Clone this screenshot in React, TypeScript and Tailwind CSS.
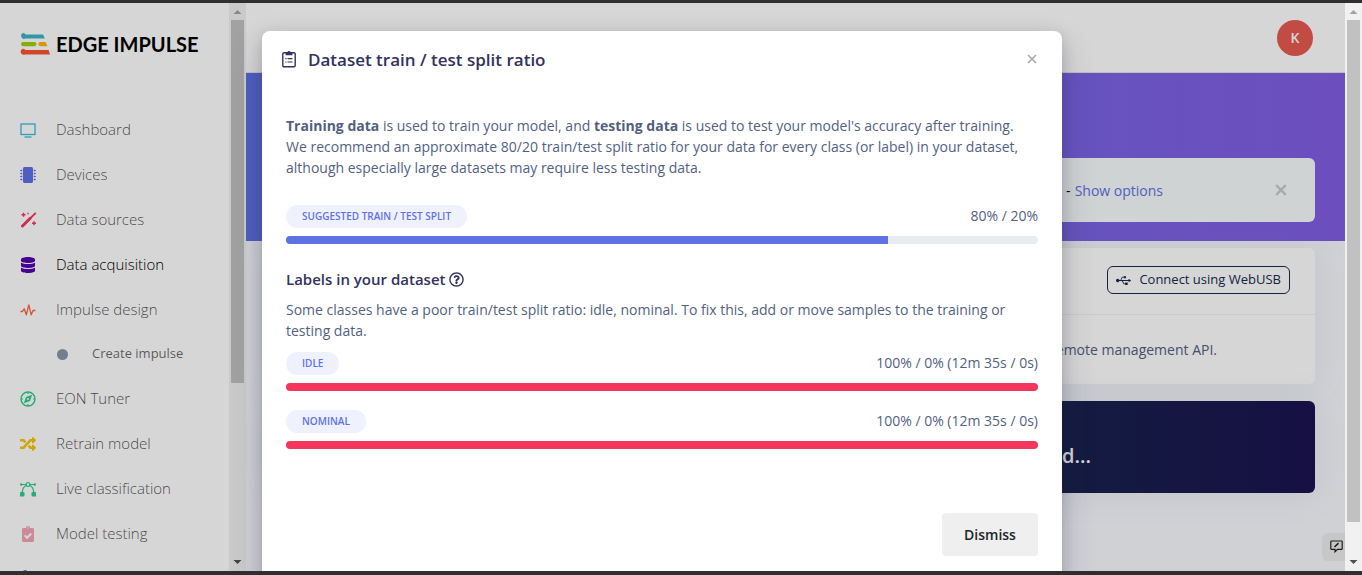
import type { ReactNode } from 'react'
import clsx from 'clsx'
import {
  FaClipboardCheck,
  FaCodeBranch,
  FaDatabase,
  FaMicrochip,
  FaRandom,
  FaRegQuestionCircle,
  FaUsb,
} from 'react-icons/fa'

function LogoMark() {
  return (
    <svg width="30" height="22" viewBox="0 0 30 22">
      <path d="M3 0a3 3 0 0 1 2.6 1.4H23l1.8 4.2H5.4A3 3 0 1 1 3 0z" fill="#3ab4c6" />
      <rect x="1" y="9" width="15.500" height="4.200" rx="2.100" fill="#a1d00a" />
      <path d="M20.400 9h5.200l1.800 4.200h-7a2.100 2.100 0 0 1 0-4.200z" fill="#ffb50a" />
      <path d="M3 15.800a3 3 0 0 1 2.400 1.200H28.600l1.400 4.400H5A3 3 0 1 1 3 15.800z" fill="#fb5430" />
    </svg>
  )
}

function TvIcon() {
  return (
    <svg width="16" height="16" viewBox="0 0 16 16" fill="none" stroke="currentColor">
      <rect x="1" y="2" width="14" height="10.500" strokeWidth="1.300" />
      <path d="M4.500 15h7" strokeWidth="1.300" />
    </svg>
  )
}

function WandIcon() {
  return (
    <svg width="17" height="16" viewBox="0 0 17 16" fill="none" stroke="currentColor">
      <path d="M2.500 14 10 6.500" strokeWidth="3" strokeLinecap="round" />
      <path d="M9 7.500 15.800 0.800" strokeWidth="1.800" />
      <path d="M3.500 0.800v4M1.500 2.800h4M14 9.200v4M12 11.200h4" strokeWidth="1.400" />
      <path d="M8 0.800v1.400" strokeWidth="1.400" />
    </svg>
  )
}

function PulseIcon() {
  return (
    <svg width="16" height="16" viewBox="0 0 16 16" fill="none" stroke="currentColor" strokeWidth="1.300" strokeLinejoin="round">
      <path d="M0.500 9.500h2l1.700-2.700 2.100 6 2.500-10 2.400 10 1.800-4.300h2.500" />
    </svg>
  )
}

function CompassIcon() {
  return (
    <svg width="16" height="16" viewBox="0 0 16 16" fill="none" stroke="currentColor">
      <circle cx="8" cy="8" r="7" strokeWidth="1.400" />
      <path d="M8 1v2M8 13v2M1 8h2M13 8h2" strokeWidth="1.200" />
      <path d="M12.200 3.800 10 10 3.800 12.200 6 6z" fill="currentColor" stroke="none" />
      <circle cx="8" cy="8" r="1" fill="#fff" stroke="none" />
    </svg>
  )
}

function VectorIcon() {
  return (
    <svg width="16" height="16" viewBox="0 0 16 16" fill="none" stroke="currentColor" strokeWidth="1.200">
      <circle cx="8" cy="3.500" r="1.900" />
      <path d="M1 3.500h5M10 3.500h5M6.300 4.200C4 5.200 2.500 7.500 2.300 11.500M9.700 4.200c2.300 1 3.800 3.300 4 7.300" />
      <circle cx="1.200" cy="3.500" r="0.600" fill="currentColor" />
      <circle cx="14.800" cy="3.500" r="0.600" fill="currentColor" />
      <rect x="0.500" y="11.500" width="3.400" height="3.400" rx="0.500" fill="currentColor" />
      <rect x="12.100" y="11.500" width="3.400" height="3.400" rx="0.500" fill="currentColor" />
    </svg>
  )
}

function ClipboardListIcon() {
  return (
    <svg width="14" height="18" viewBox="0 0 14 18" fill="none" stroke="currentColor">
      <rect x="0.800" y="2.800" width="12.400" height="14" rx="1.200" strokeWidth="1.400" />
      <path d="M3.600 2.300h1.700a1.800 1.800 0 0 1 3.400 0h1.700v2.900H3.600z" fill="currentColor" stroke="none" />
      <path d="M5.500 8.700h5M5.500 12h5M3.300 8.700h1.200M3.300 12h1.200" strokeWidth="1.200" />
    </svg>
  )
}

function FeedbackIcon() {
  return (
    <svg width="13" height="13" viewBox="0 0 13 13" fill="none" stroke="currentColor" strokeWidth="1.200">
      <path d="M1.500 1h10a.7.7 0 0 1 .7.7v7a.7.7 0 0 1-.7.7H7.500L5 11.800V9.400H1.500a.7.7 0 0 1-.7-.7v-7A.7.7 0 0 1 1.500 1z" />
      <path d="M4.500 7 8.500 3.200" strokeWidth="1.600" />
    </svg>
  )
}

function CrossIcon({ size, stroke }: { size: number; stroke: number }) {
  return (
    <svg width={size} height={size} viewBox="0 0 10 10" stroke="currentColor" strokeWidth={stroke}>
      <path d="M1 1l8 8M9 1l-8 8" />
    </svg>
  )
}

function Scrollbar({ thumb }: { thumb: number }) {
  return (
    <div className="flex w-[17px] shrink-0 flex-col items-center bg-[#f1f1f1]">
      <svg className="h-[17px] w-[9px] shrink-0 text-[#a3a3a3]" viewBox="0 0 9 17">
        <path d="M0.500 11 4.500 7l4 4z" fill="currentColor" />
      </svg>
      <div className="w-full min-h-0 flex-1 px-0.5">
        <div className="bg-[#c1c1c1]" style={{ height: `${thumb}%` }} />
      </div>
      <svg className="h-[17px] w-[9px] shrink-0 text-[#505050]" viewBox="0 0 9 17">
        <path d="M0.500 6 4.500 10l4-4z" fill="currentColor" />
      </svg>
    </div>
  )
}

type NavItem = {
  label: string
  icon: ReactNode
  color: string
  active?: boolean
  children?: string[]
}

const navItems: NavItem[] = [
  { label: 'Dashboard', icon: <TvIcon />, color: 'text-[#3bbbe0]' },
  { label: 'Devices', icon: <FaMicrochip size={16} />, color: 'text-[#5e72e4]' },
  { label: 'Data sources', icon: <WandIcon />, color: 'text-[#f5365c]' },
  { label: 'Data acquisition', icon: <FaDatabase size={16} />, color: 'text-[#5603ad]', active: true },
  { label: 'Impulse design', icon: <PulseIcon />, color: 'text-[#fb6340]', children: ['Create impulse'] },
  { label: 'EON Tuner', icon: <CompassIcon />, color: 'text-[#2dce89]' },
  { label: 'Retrain model', icon: <FaRandom size={16} />, color: 'text-[#f7c608]' },
  { label: 'Live classification', icon: <VectorIcon />, color: 'text-[#2dce89]' },
  { label: 'Model testing', icon: <FaClipboardCheck size={16} />, color: 'text-[#f3a4b5]' },
]

function Sidebar() {
  return (
    <aside className="w-[229px] shrink-0 overflow-hidden bg-white">
      <div className="flex h-[104px] items-start gap-1.5 px-5 pt-[30px]">
        <LogoMark />
        <span className="font-['Lato',sans-serif] text-[20px] leading-[22px] font-bold text-black">EDGE IMPULSE</span>
      </div>
      <nav>
        {navItems.map((item) => (
          <div key={item.label}>
            <a
              href="#"
              className={clsx('flex h-[45px] items-center pl-5 text-[15px] font-light', item.active ? 'text-black' : 'text-black/70')}
            >
              <span className={clsx('flex w-9 items-center', item.color)}>{item.icon}</span>
              {item.label}
            </a>
            {item.children?.map((child) => (
              <a key={child} href="#" className="flex h-11 items-center pl-[57px] text-[13px] text-black/60">
                <span className="mr-6 size-[11px] rounded-full bg-[#8898aa]" />
                {child}
              </a>
            ))}
          </div>
        ))}
        <a href="#" aria-label="Versioning" className="flex h-[45px] items-center pl-5 text-[#5e72e4]">
          <FaCodeBranch size={18} />
        </a>
      </nav>
    </aside>
  )
}

function Page() {
  return (
    <main className="relative min-w-0 flex-1 overflow-hidden bg-[#f8f9fe]">
      <header className="flex h-[70px] items-center justify-end border-b border-black/10 bg-white pr-8">
        <button className="size-9 rounded-full bg-[#e75a51] text-[14px] font-semibold text-white">K</button>
      </header>

      <section className="flex h-[168px] flex-col justify-end bg-linear-to-r from-[#5e72e4] to-[#825ee4] px-[30px] pb-[19px]">
        <div className="flex h-16 items-center justify-end rounded-md bg-[#f7fcfc] pr-7 text-[14px]">
          <span className="text-[#11cdef]">s</span>
          <span className="px-1 text-black">-</span>
          <a href="#" className="mr-28 text-[#5e72e4]">Show options</a>
          <button className="text-[#c8cccc]" aria-label="Close alert">
            <CrossIcon size={12} stroke={2} />
          </button>
        </div>
      </section>

      <div className="px-[30px] pt-[7px]">
        <section className="h-[136px] rounded-md bg-white shadow-[0_0_32px_rgba(136,152,170,0.15)]">
          <div className="flex h-[67px] items-center justify-end border-b border-black/5 pr-[25px] pb-0.5">
            <button className="flex h-7 items-center gap-2 rounded-md border border-[#172b4d] px-2 text-[13px] font-medium text-[#172b4d]">
              <FaUsb size={15} />
              Connect using WebUSB
            </button>
          </div>
          <p className="flex h-[69px] items-center justify-end pr-[98px] text-[14px] text-[#525f7f]">remote management API.</p>
        </section>

        <section className="mt-[17px] flex h-[92px] items-center justify-end rounded-md bg-linear-to-r from-[#172b4d] via-[#18224d] via-75% to-[#1b1350] pt-[18px] pr-[224px] shadow-[0_0_32px_rgba(136,152,170,0.15)]">
          <h3 className="text-[20px] font-semibold text-white">d...</h3>
        </section>
      </div>

      <button className="absolute right-0 bottom-[10px] flex h-7 w-[23px] items-center justify-end rounded-l-md bg-[#eeeeee] pr-0.5 pb-0.5 text-[#222]" aria-label="Feedback">
        <FeedbackIcon />
      </button>
    </main>
  )
}

function SplitBar({ label, value, train, bar }: { label: string; value: string; train: number; bar: string }) {
  return (
    <div>
      <div className="flex h-[23px] items-start justify-between">
        <span className="flex h-[23px] items-center rounded-full bg-[#eff1fe] px-4 text-[10px] font-semibold text-[#5e72e4] uppercase">{label}</span>
        <span>{value}</span>
      </div>
      <div className="mt-2 h-2 overflow-hidden rounded bg-[#e9ecef]">
        <div className={clsx('h-full', bar)} style={{ width: `${train}%` }} />
      </div>
    </div>
  )
}

function SplitDialog() {
  return (
    <div role="dialog" aria-labelledby="split-title" className="mt-7 w-[800px] shrink-0 self-start rounded-lg bg-white pb-10 text-[14px] leading-[21px] text-[#525f7f] shadow-[0_15px_35px_rgba(50,50,93,0.2),0_5px_15px_rgba(0,0,0,0.17)]">
      <div className="flex h-14 items-center justify-between pr-[25px] pl-5 text-[#32325d]">
        <h2 id="split-title" className="flex items-center gap-3 text-[17px] font-semibold">
          <ClipboardListIcon />
          Dataset train / test split ratio
        </h2>
        <button className="text-[#a9a9a9]" aria-label="Close">
          <CrossIcon size={10} stroke={1.7} />
        </button>
      </div>

      <div className="px-6 pt-7">
        <p className="mb-[27px]">
          <b>Training data</b> is used to train your model, and <b>testing data</b> is used to test your model's accuracy after
          training. We recommend an approximate 80/20 train/test split ratio for your data for every class (or label) in your
          dataset, although especially large datasets may require less testing data.
        </p>
        <SplitBar label="Suggested train / test split" value="80% / 20%" train={80} bar="bg-[#5e72e4]" />

        <h3 className="mt-[23px] mb-2 flex items-center gap-1 text-[15px] leading-6 font-semibold text-[#32325d]">
          Labels in your dataset
          <FaRegQuestionCircle size={15} />
        </h3>
        <p className="mb-[11px]">
          Some classes have a poor train/test split ratio: idle, nominal. To fix this, add or move samples to the training or
          testing data.
        </p>
        <div className="flex flex-col gap-[19px]">
          <SplitBar label="Idle" value="100% / 0% (12m 35s / 0s)" train={100} bar="bg-[#f5365c]" />
          <SplitBar label="Nominal" value="100% / 0% (12m 35s / 0s)" train={100} bar="bg-[#f5365c]" />
        </div>
        <div className="mt-16 flex justify-end">
          <button className="h-[43px] w-24 rounded bg-[#efefef] text-[14px] font-semibold text-[#212529]">Dismiss</button>
        </div>
      </div>
    </div>
  )
}

export default function App() {
  return (
    <div className="flex h-screen flex-col overflow-hidden bg-[#302f30] pt-[3px] pb-1 font-['Open_Sans',sans-serif]">
      <div className="flex min-h-0 flex-1">
        <div className="relative flex min-w-0 flex-1 overflow-hidden">
          <Sidebar />
          <Scrollbar thumb={68} />
          <Page />
          <div className="absolute inset-0 flex justify-center overflow-hidden bg-black/16 pr-[21px]">
            <SplitDialog />
          </div>
        </div>
        <Scrollbar thumb={94} />
      </div>
    </div>
  )
}
